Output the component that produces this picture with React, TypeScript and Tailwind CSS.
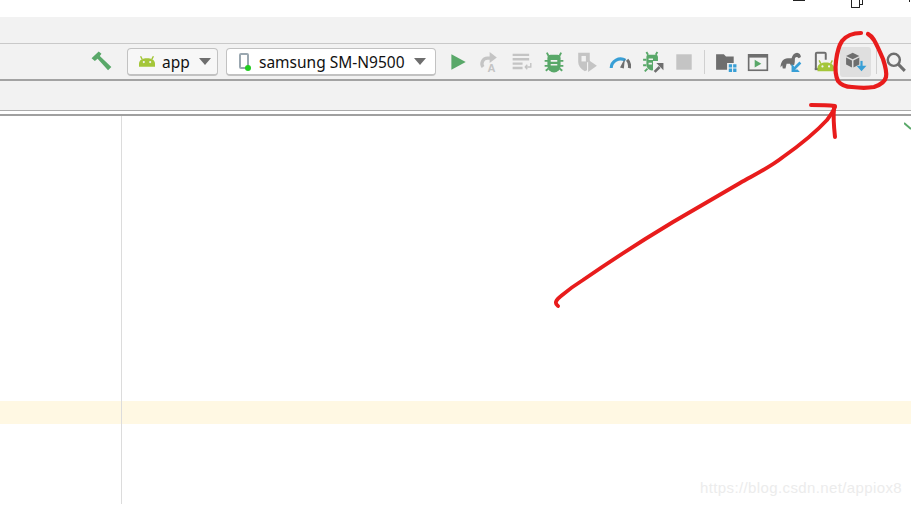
import { ReactNode } from 'react';

const GREEN = '#59a869';
const GRAY = '#6e6e6e';
const LIGHT = '#c4c4c4';
const BLUE = '#389fd6';

const Icon = ({ w, children, className = '' }: { w: string; children: ReactNode; className?: string }) => (
  <div className={`flex shrink-0 items-center justify-center ${w} ${className}`}>
    <svg className="shrink-0" width="22" height="22" viewBox="0 0 20 20">{children}</svg>
  </div>
);

const Caret = () => <span className="h-0 w-0 border-x-[6px] border-t-[7px] border-x-transparent border-t-[#6e6e6e]" />;

const AndroidHead = ({ x = 0, y = 0 }: { x?: number; y?: number }) => (
  <g transform={`translate(${x} ${y})`} fill="#a4c639">
    <path d="M0 7.500C.5 4.500 3.500 3 7.500 3s7 1.500 7.500 4.500V11H0z" />
    <path d="M3 4 1.500 1M12 4l1.500-3" stroke="#a4c639" strokeWidth="1.300" />
    <circle cx="4.500" cy="6.500" r="1" fill="#f2f2f2" />
    <circle cx="10.500" cy="6.500" r="1" fill="#f2f2f2" />
  </g>
);

export default function App() {
  return (
    <div className="relative h-[505px] w-[911px] overflow-hidden bg-white font-['Noto_Sans',sans-serif]">
      {/* cut off window controls */}
      <div className="flex h-[17px] items-start">
        <div className="ml-[793px] h-px w-3 bg-[#222]" />
        <div className="ml-[46px] flex">
          <div className="h-[8px] w-[9px] rounded-b-[1px] border-x border-b border-[#222]" />
          <div className="h-[5px] w-[3px] border-r border-b border-[#222]" />
        </div>
        <div className="ml-[46px] h-[2px] w-px bg-[#222]" />
      </div>

      <div className="h-[26px] bg-[#f2f2f2]" />

      {/* main toolbar */}
      <div className="flex h-[38px] items-center border-t border-b-2 border-t-[#c9c9c9] border-b-[#a3a3a3] bg-[#f2f2f2] pl-[92px]">
        <Icon w="w-[20px]">
          <path d="M.500 6.500 7 .500l2.500 2-1.500 2 10.500 10-3 3L6 7 3.500 9z" fill={GREEN} />
        </Icon>
        <div className="ml-[15px] flex h-[28px] w-[91px] shrink-0 items-center rounded-[4px] border border-b-2 border-[#c2c2c2] bg-[#f7f7f7] pl-[11px] text-[15.5px] text-[#111]">
          <svg width="16" height="12" viewBox="0 0 15 11"><AndroidHead /></svg>
          <span className="ml-[7px] translate-y-[2px] leading-none">app</span>
          <span className="ml-[9px] flex"><Caret /></span>
        </div>
        <div className="ml-2 flex h-[28px] w-[210px] shrink-0 items-center rounded-[4px] border border-b-2 border-[#c2c2c2] bg-white pl-[12px] text-[15.5px] text-[#111]">
          <div className="relative h-[16px] w-[10px] shrink-0 rounded-[2px] border-2 border-[#9aa7b0]">
            <span className="absolute -right-[4px] -bottom-[4px] h-[6px] w-[6px] rounded-full bg-[#22cc22]" />
          </div>
          <span className="ml-[10px] translate-y-[2px] whitespace-nowrap leading-none">samsung SM-N9500</span>
          <span className="ml-[9px] flex"><Caret /></span>
        </div>

        <Icon w="w-[20px]" className="ml-[12px]">
          <path d="M4 3 17 10 4 17z" fill={GREEN} />
        </Icon>
        <Icon w="w-[20px]" className="ml-[10px]">
          <path d="M13 6.500H9.500a5 5 0 0 0-4 8" fill="none" stroke={LIGHT} strokeWidth="3" />
          <path d="M11.500 1 18 6l-6.500 5z" fill={LIGHT} />
          <text x="9.500" y="19.500" fontSize="10" fill={LIGHT} fontFamily="Liberation Sans, sans-serif" fontWeight="700">A</text>
        </Icon>
        <Icon w="w-[20px]" className="ml-[14px]">
          <path d="M1.500 3.500h15M1.500 7.500h15M1.500 11.500h9M1.500 15.500h9" stroke={LIGHT} strokeWidth="2.200" />
          <path d="M18 11v3.500h-5m1.800-2L13 14.500l1.800 2" fill="none" stroke={LIGHT} strokeWidth="1.300" />
        </Icon>
        <Icon w="w-[20px]" className="ml-[12px]">
          <path d="M5 4.500 3.500 1.500M15 4.500l1.500-3M1.500 9h3M15.500 9h3M1.500 13.500h3M15.500 13.500h3M2.500 18l2.500-2M17.500 18 15 16" stroke={GREEN} strokeWidth="1.700" />
          <path d="M7 3.500h6a3 3 0 0 1 3 3v7a6 6 0 0 1-12 0v-7a3 3 0 0 1 3-3z" fill={GREEN} />
          <path d="M7 9h6M7 12.500h6" stroke="#f2f2f2" strokeWidth="1.500" />
        </Icon>
        <Icon w="w-[20px]" className="ml-[13px]">
          <path d="M2 1.500h10.500V9L10 10.500v7L8 18.500C4 16 2 13 2 10z" fill={LIGHT} />
          <path d="M5 4.500h4v5H5z" fill="#f2f2f2" />
          <path d="M11 8l8 5.500-8 5.500z" fill={LIGHT} />
        </Icon>
        <Icon w="w-[20px]" className="ml-[13px]">
          <path d="M2 15.500a8.500 8.500 0 0 1 13-7" fill="none" stroke={BLUE} strokeWidth="2.800" />
          <path d="M16.500 8a8.500 8.500 0 0 1 2 7.500" fill="none" stroke={GRAY} strokeWidth="2.800" />
          <path d="m14.500 6.500-4.500 8.500 3.500 1z" fill={GRAY} />
        </Icon>
        <Icon w="w-[20px]" className="ml-[13px]">
          <path d="M5.500 3.500 4 1M12.500 3.500 14 1M1 8h3M1 13h3M2.500 18.500l2.500-2.500" stroke={GREEN} strokeWidth="1.700" />
          <path d="M5 3.500h8a2 2 0 0 1 1.500 2V9H10v8.500a5 5 0 0 1-6-5V5.500a2 2 0 0 1 1-2z" fill={GREEN} />
          <path d="M6 7.500h4M6 11.500h3" stroke="#f2f2f2" strokeWidth="1.500" />
          <path d="M11.500 19l4.500-4.500" stroke={GRAY} strokeWidth="2.400" />
          <path d="M13 11h6.500v6.500z" fill={GRAY} />
        </Icon>
        <Icon w="w-[20px]" className="ml-[11px]">
          <rect x="3" y="3" width="14" height="14" fill={LIGHT} />
        </Icon>
        <div className="ml-[10px] h-[24px] w-px shrink-0 bg-[#d0d0d0]" />
        <Icon w="w-[20px]" className="ml-[11px]">
          <path d="M1 3h7l2 2h7v6h-6v6H1z" fill={GRAY} />
          <path d="M12.500 12h3v3h-3zM16.500 12h3v3h-3zM12.500 16h3v3h-3zM16.500 16h3v3h-3z" fill={BLUE} />
        </Icon>
        <Icon w="w-[20px]" className="ml-[12px]">
          <rect x="1.500" y="3.500" width="17" height="14" fill="none" stroke={GRAY} strokeWidth="1.500" />
          <rect x="1" y="3" width="18" height="3" fill={GRAY} />
          <path d="m7 8 6 3.500L7 15z" fill={GREEN} />
        </Icon>
        <Icon w="w-[20px]" className="ml-[13px]">
          <path d="M.500 15C.500 10 3 6.500 7 6.500h3.500c1-3 2.500-5 5-5 2 0 3.500 2 3.500 4l-2 1c-1-1-2-1.500-3-.5s0 3-1 6.500l-3 1-1-2H6l-1 4.500H2.500L2 13z" fill={GRAY} />
          <path d="M18.500 10.500 12 17" fill="none" stroke={BLUE} strokeWidth="2.400" />
          <path d="M10.500 11.500v7.500H18l-2-2.200h-3.300v-3.200z" fill={BLUE} />
        </Icon>
        <Icon w="w-[20px]" className="ml-[12px]">
          <path d="M3.500 16.500V2.500a1 1 0 0 1 1-1h7a1 1 0 0 1 1 1V8" fill="none" stroke={GRAY} strokeWidth="1.800" />
          <path d="M2.500 16.500h3" stroke={GRAY} strokeWidth="1.800" />
          <AndroidHead x={5} y={7.500} />
        </Icon>
        {/* sdk manager, hovered */}
        <div className="ml-[7px] flex h-[30px] w-[31px] shrink-0 items-center justify-center rounded-[3px] bg-[#dfdfdf]">
          <svg width="22" height="22" viewBox="0 0 20 20">
            <path d="m7 1.500 6 3-6 3-6-3z" fill={GRAY} />
            <path d="M1 6l5.300 2.700V15L1 12.300zM13 6 7.700 8.700V15l5.300-2.700z" fill={GRAY} />
            <path d="M15 9v6" stroke={BLUE} strokeWidth="2" />
            <path d="M10.500 13.500h9L15 18.500z" fill={BLUE} />
          </svg>
        </div>
        <div className="ml-[5px] h-[24px] w-px shrink-0 bg-[#d0d0d0]" />
        <Icon w="w-[20px]" className="ml-[9px]">
          <circle cx="8" cy="8" r="5.500" fill="none" stroke={GRAY} strokeWidth="2.200" />
          <path d="m12 12 6 6" stroke={GRAY} strokeWidth="2.800" />
        </Icon>
      </div>

      {/* navigation strip */}
      <div className="h-[30px] border-b border-[#ababab] bg-[#f2f2f2]" />
      <div className="h-[5px] border-b-2 border-[#a0a0a0] bg-white" />

      {/* editor */}
      <div className="relative flex h-[389px] flex-col pt-[285px]">
        <div className="h-[23px] bg-[#fff8e3]" />
        <div className="absolute top-0 bottom-px left-[121px] w-px bg-[#dcdcdc]" />
        <svg className="absolute top-[6px] right-0" width="7" height="8" viewBox="0 0 7 8">
          <path d="M0 1 7 7" fill="none" stroke={GREEN} strokeWidth="2" />
        </svg>
        <span className="absolute right-[9px] bottom-[7px] whitespace-nowrap font-['Liberation_Sans',sans-serif] text-[15px] leading-[20px] tracking-[.38px] text-[#ececec]">
          https://blog.csdn.net/appiox8
        </span>
      </div>

      {/* hand drawn annotation */}
      <svg className="absolute inset-0" width="911" height="505" viewBox="0 0 911 505" fill="none" stroke="#e81c1c" strokeLinecap="round" strokeLinejoin="round">
        <path d="M558 306C554 303 556 300 561 296C568 290 575 285 583 280C612 260 643 240 673 222C695 209 718 196 740 183C754 175 769 168 783 157C800 145 815 133 827 120C830 116 833 112 835 107" strokeWidth="3.800" />
        <path d="M811 105C819 105 827 105 835 106M834 108C833 118 834 128 835 137" strokeWidth="4" />
        <path d="M861 33C853 33 846 36 842 41C838 47 837 53 836 61C835 69 836 77 838 81C841 85 846 87 852 87C860 88 868 88 874 87C880 85 885 82 886 77C887 72 885 65 883 59C880 52 877 45 874 40C872 37 870 35 868 34" strokeWidth="4.200" />
      </svg>
    </div>
  );
}
